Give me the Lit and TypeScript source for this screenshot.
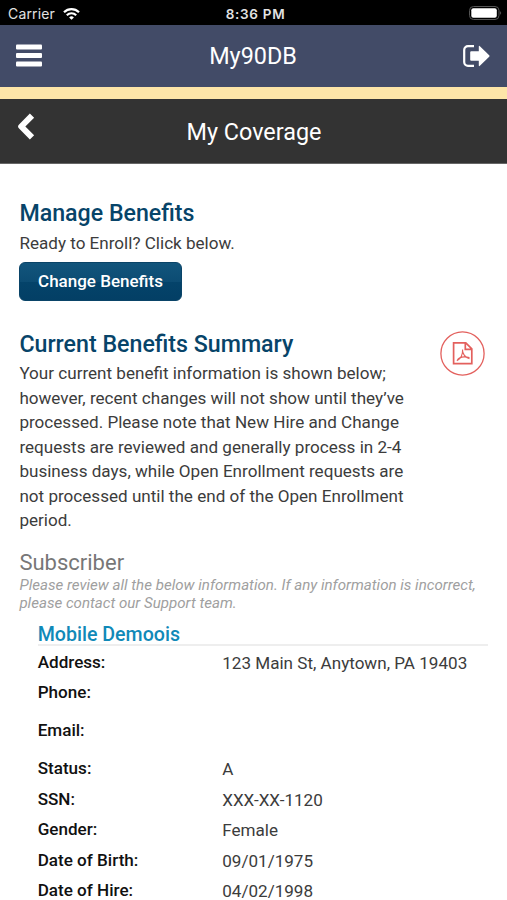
import { LitElement, html, css } from "lit";
import { customElement } from "lit/decorators.js";
import { classMap } from "lit/directives/class-map.js";

const rows: { label: string; value: string }[] = [
  { label: "Address:", value: "123 Main St, Anytown, PA 19403" },
  { label: "Phone:", value: "" },
  { label: "Email:", value: "" },
  { label: "Status:", value: "A" },
  { label: "SSN:", value: "XXX-XX-1120" },
  { label: "Gender:", value: "Female" },
  { label: "Date of Birth:", value: "09/01/1975" },
  { label: "Date of Hire:", value: "04/02/1998" },
];

@customElement("app-root")
export class AppRoot extends LitElement {
  static styles = css`
    :host {
      display: flex;
      flex-direction: column;
      height: 900px;
      overflow: hidden;
      background: #fff;
      color: #3c3c3c;
      font: 400 17.08px/24.45px Roboto, sans-serif;
      -webkit-font-smoothing: antialiased;
    }
    * { box-sizing: border-box; }
    h1, h2, h3, h4, p, dl, dt, dd { margin: 0; font-weight: 400; }
    svg { display: block; }
    .status, .nav, .sub {
      display: grid;
      grid-template-columns: 1fr auto 1fr;
      align-items: center;
      flex: none;
      color: #fff;
    }
    .status {
      height: 25px;
      padding: 2px 4px 0 8px;
      background: #000;
      font: 400 14px/20px Inter, sans-serif;
      color: #e2e2e2;
    }
    .carrier { display: flex; align-items: center; gap: 8px; }
    .carrier span { letter-spacing: 0.15px; }
    .time { font-size: 13.5px; font-weight: 600; letter-spacing: 0.7px; }
    .end { justify-self: end; }
    .nav {
      height: 61.5px;
      padding: 0 17px 0 16px;
      background: #424b67;
    }
    .band { flex: none; height: 12.5px; background: #fde5a8; }
    .sub {
      height: 65px;
      padding: 0 16px 0 17px;
      background: #333;
      border-bottom: 1px solid #666;
    }
    .title { padding-top: 1px; font-size: 23.4px; line-height: 30px; }
    .back { margin-top: -10px; }
    .content { padding: 34px 19px 0 19.4px; }
    .heading {
      padding-bottom: 2px;
      color: #074469;
      font-size: 23.2px;
      font-weight: 500;
      line-height: 30px;
    }
    .first { padding-bottom: 3px; }
    .button {
      display: block;
      width: 163px;
      height: 39px;
      margin: 7px 0 28px -0.4px;
      padding: 0;
      border: 1px solid #0a4468;
      border-radius: 6px;
      background: linear-gradient(#12557c, #0c4c73 50%, #04436a 51%, #033f65);
      color: #fff;
      font: 500 17px/37px Roboto, sans-serif;
    }
    .summary { display: flex; align-items: flex-start; justify-content: space-between; }
    .info { width: 400px; }
    .pdf { flex: none; margin: 2px 3.5px 0 0; }
    .section {
      margin-top: 16px;
      color: #777;
      font-size: 22px;
      line-height: 27px;
    }
    .hint { color: #a0a0a0; font-size: 15.1px; font-style: italic; line-height: 18.5px; }
    .member { margin-left: 18.3px; }
    .name {
      margin-top: 7px;
      height: 26px;
      border-bottom: 2px solid #eee;
      color: #1089b8;
      font-size: 19.6px;
      font-weight: 500;
      line-height: 29px;
    }
    .rows { padding-top: 4px; }
    .row { display: grid; grid-template-columns: 184.5px 1fr; height: 30.5px; }
    .row.empty { height: 38px; }
    .label { color: #111; font-weight: 500; }
    .value { padding-top: 1px; }
  `;

  render() {
    return html`
      <div class="status">
        <div class="carrier">
          <span>Carrier</span>
          <svg width="17" height="12" viewBox="0 0 17 12" fill="none" stroke="#fff" stroke-width="2.2">
            <path d="M1 4.2a10.7 10.7 0 0 1 15 0M3.8 7.2a6.7 6.7 0 0 1 9.4 0" />
            <path d="M8.5 11.8 6.1 9.4a3.4 3.4 0 0 1 4.8 0Z" fill="#fff" stroke="none" />
          </svg>
        </div>
        <span class="time">8:36 PM</span>
        <svg class="end" width="34" height="15" viewBox="0 0 34 15">
          <rect x="0.5" y="0.5" width="29.5" height="13" rx="4" fill="none" stroke="#555" />
          <rect x="2.3" y="2.3" width="25.5" height="9.5" rx="2" fill="#fff" />
          <path d="M31.3 5q1.8 2 0 4z" fill="#777" />
        </svg>
      </div>
      <header class="nav">
        <svg width="26" height="23" viewBox="0 0 26 23" fill="#fff">
          <rect width="26" height="5" y="0.5" rx="1" />
          <rect width="26" height="5" y="9" rx="1" />
          <rect width="26" height="5" y="17.5" rx="1" />
        </svg>
        <h1 class="title">My90DB</h1>
        <svg class="end" width="27" height="22" viewBox="0 0 27 22">
          <path d="M11 1.2H5A3.8 3.8 0 0 0 1.2 5v12A3.8 3.8 0 0 0 5 20.8h6" fill="none" stroke="#fff" stroke-width="2.2" />
          <path d="M8.2 6.3h7.6V1.6q0-1.4 1.1-.4l9.3 9.1q.8.7 0 1.4l-9.3 9.1q-1.1 1-1.1-.4V15.7H8.2q-1 0-1-1V7.3q0-1 1-1Z" fill="#fff" />
        </svg>
      </header>
      <div class="band"></div>
      <div class="sub">
        <svg class="back" width="18" height="27" viewBox="0 0 18 27" fill="none" stroke="#fff" stroke-width="6" stroke-linejoin="round">
          <path d="M15 2.6 4.2 13.5 15 24.4" />
        </svg>
        <h2 class="title">My Coverage</h2>
        <span></span>
      </div>
      <main class="content">
        <h3 class="heading first">Manage Benefits</h3>
        <p>Ready to Enroll? Click below.</p>
        <button class="button">Change Benefits</button>
        <div class="summary">
          <div class="info">
            <h3 class="heading">Current Benefits Summary</h3>
            <p>
              Your current benefit information is shown below;<br />
              however, recent changes will not show until they’ve<br />
              processed. Please note that New Hire and Change<br />
              requests are reviewed and generally process in 2-4<br />
              business days, while Open Enrollment requests are<br />
              not processed until the end of the Open Enrollment<br />
              period.
            </p>
          </div>
          <svg class="pdf" width="45" height="45" viewBox="0 0 45 45" fill="none" stroke="#e3605d">
            <circle cx="22.5" cy="22.5" r="21.6" stroke-width="1.3" />
            <path d="M13.6 11.8h12.2l6 6v14.9H13.6ZM25.3 11.8v6.5h6.5" stroke-width="1.7" />
            <path d="M17 29.8c3.500-2 5.800-6 5.600-11.300M22.500 18.500c-.2 4 2.500 8 7 9.200M17 29.800c1.500-3 6-4.800 12.500-3.200" stroke-width="1.1" />
          </svg>
        </div>
        <h3 class="section">Subscriber</h3>
        <p class="hint">
          Please review all the below information. If any information is incorrect,<br />
          please contact our Support team.
        </p>
        <section class="member">
          <h4 class="name">Mobile Demoois</h4>
          <dl class="rows">
            ${rows.map(
              (r) => html`<div class=${classMap({ row: true, empty: !r.value })}>
                <dt class="label">${r.label}</dt>
                <dd class="value">${r.value}</dd>
              </div>`,
            )}
          </dl>
        </section>
      </main>
    `;
  }
}
